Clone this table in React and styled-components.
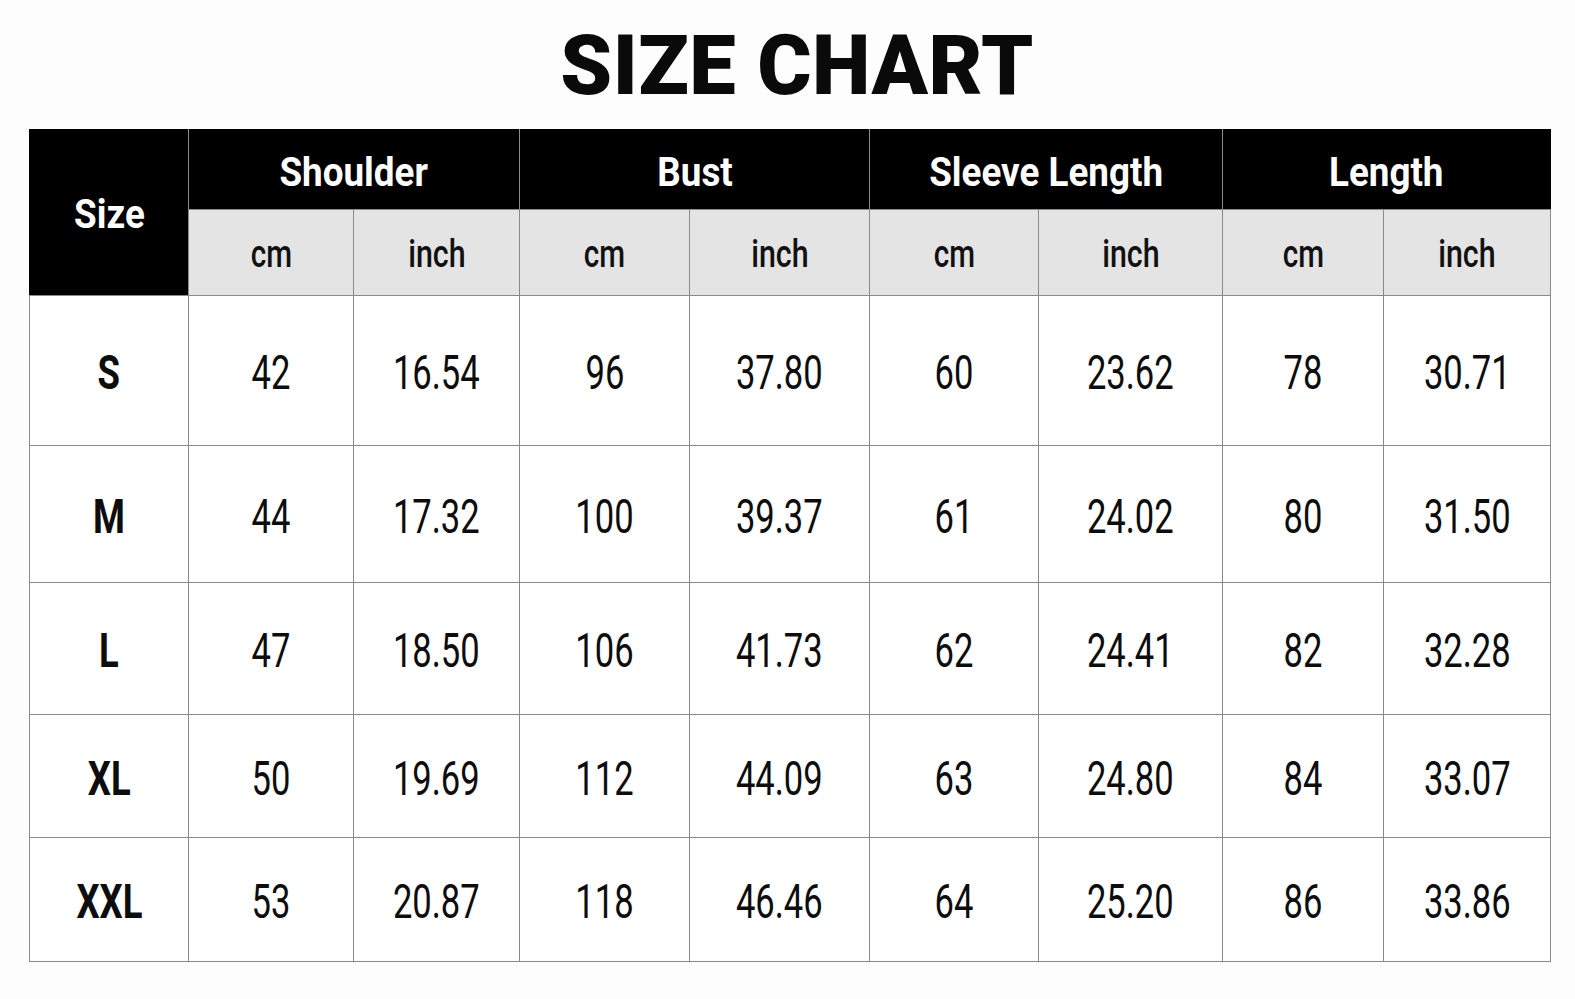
import React from "react";
import styled, { createGlobalStyle } from "styled-components";

const GlobalStyle = createGlobalStyle`
  html, body {
    margin: 0;
    padding: 0;
    background: #fdfdfd;
  }
  body {
    font-family: Roboto, "Liberation Sans", Arial, sans-serif;
    color: #111;
  }
`;

const Page = styled.div`
  width: 1575px;
  height: 999px;
  padding: 16px 0 0 29px;
  box-sizing: border-box;
  overflow: hidden;
`;

const Title = styled.h1`
  margin: 0 0 13px;
  width: 1514px;
  padding-left: 22px;
  box-sizing: border-box;
  text-align: center;
  font-size: 83px;
  line-height: 100px;
  font-weight: 900;
  letter-spacing: 0.4px;
  color: #0a0a0a;
`;

const Table = styled.table`
  width: 1521px;
  table-layout: fixed;
  border-collapse: collapse;
  background: #fff;
`;

const HeadCell = styled.th`
  background: #000;
  color: #fff;
  border: 1.5px solid #8a8a8a;
  border-top-color: #000;
  border-left-color: ${(p) => (p.$first ? "#000" : "#8a8a8a")};
  border-right-color: ${(p) => (p.$last ? "#000" : "#8a8a8a")};
  height: ${(p) => p.$h}px;
  padding: ${(p) => (p.$first ? "4px 0 0" : "6px 0 0")};
  font-size: 40px;
  font-weight: 700;
  text-align: center;
  vertical-align: middle;
`;

const SubCell = styled.th`
  background: #e4e4e4;
  border: 1.5px solid #8a8a8a;
  height: 82px;
  padding: 3px 0 0;
  font-size: 38px;
  font-weight: 500;
  color: #111;
  text-align: center;
  vertical-align: middle;
`;

const Cell = styled.td`
  border: 1.5px solid #8a8a8a;
  padding: 4px 0 0;
  height: ${(p) => p.$h}px;
  text-align: center;
  vertical-align: middle;
  font-size: 48px;
  font-weight: ${(p) => (p.$bold ? 700 : 400)};
  color: #0d0d0d;
`;

const Squeeze = styled.span`
  display: inline-block;
  transform: scaleX(${(p) => p.$x});
  white-space: nowrap;
`;

const widths = [159, 165, 166, 170, 180, 169, 184, 161, 167];
const groups = ["Shoulder", "Bust", "Sleeve Length", "Length"];
const heights = [145, 132, 127, 118, 119];

const rows = [
  ["S", "42", "16.54", "96", "37.80", "60", "23.62", "78", "30.71"],
  ["M", "44", "17.32", "100", "39.37", "61", "24.02", "80", "31.50"],
  ["L", "47", "18.50", "106", "41.73", "62", "24.41", "82", "32.28"],
  ["XL", "50", "19.69", "112", "44.09", "63", "24.80", "84", "33.07"],
  ["XXL", "53", "20.87", "118", "46.46", "64", "25.20", "86", "33.86"],
];

export default function App() {
  return (
    <Page>
      <GlobalStyle />
      <Title>SIZE CHART</Title>
      <Table>
        <colgroup>
          {widths.map((w, i) => (
            <col key={i} style={{ width: w }} />
          ))}
        </colgroup>
        <thead>
          <tr>
            <HeadCell rowSpan={2} $h={73} $first>
              <Squeeze $x={0.92}>Size</Squeeze>
            </HeadCell>
            {groups.map((g, i) => (
              <HeadCell key={g} colSpan={2} $h={73} $last={i === groups.length - 1}>
                <Squeeze $x={0.92}>{g}</Squeeze>
              </HeadCell>
            ))}
          </tr>
          <tr>
            {groups.map((g) => (
              <React.Fragment key={g}>
                <SubCell>
                  <Squeeze $x={0.78}>cm</Squeeze>
                </SubCell>
                <SubCell>
                  <Squeeze $x={0.8}>inch</Squeeze>
                </SubCell>
              </React.Fragment>
            ))}
          </tr>
        </thead>
        <tbody>
          {rows.map((r, ri) => (
            <tr key={r[0]}>
              {r.map((v, ci) => (
                <Cell key={ci} $h={heights[ri]} $bold={ci === 0}>
                  <Squeeze $x={ci === 0 ? 0.76 : 0.72}>{v}</Squeeze>
                </Cell>
              ))}
            </tr>
          ))}
        </tbody>
      </Table>
    </Page>
  );
}
